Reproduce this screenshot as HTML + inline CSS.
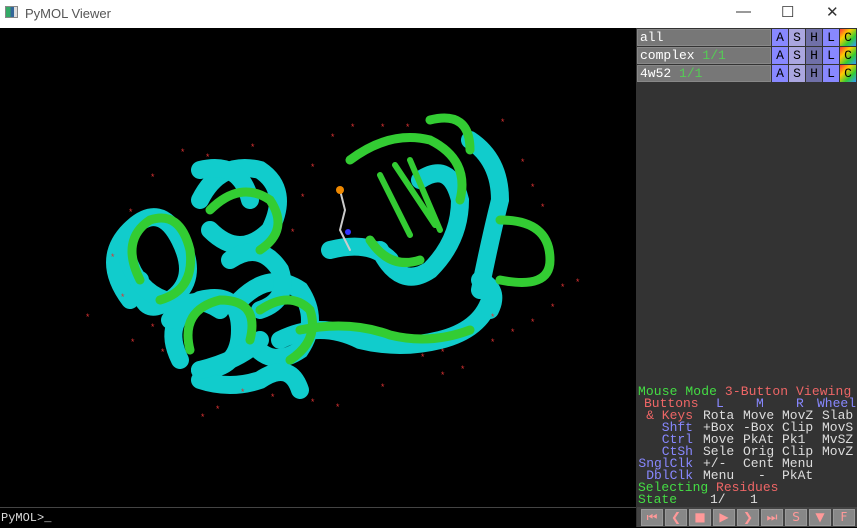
<!DOCTYPE html>
<html><head><meta charset="utf-8"><style>
*{margin:0;padding:0;box-sizing:border-box}
body{width:857px;height:527px;overflow:hidden;background:#000;font-family:"Liberation Mono",monospace;position:relative}
#title{position:absolute;left:0;top:0;width:857px;height:28px;background:#fff;font-family:"Liberation Sans",sans-serif;font-size:13px;color:#555}
#title .t{position:absolute;left:25px;top:6px}
#title .ic{position:absolute;left:5px;top:6px;width:13px;height:12px;border:1px solid #888;background:linear-gradient(90deg,#3a6 0 40%,#369 40% 75%,#ddd 75%)}
#title .b{position:absolute;top:3px;font-size:15px;color:#333}
#vp{position:absolute;left:0;top:28px;width:636px;height:479px;background:#000}
#panel{position:absolute;left:636px;top:28px;width:221px;height:499px;background:#333}
.row{position:absolute;left:637px;height:17px;width:220px}
.row .n{position:absolute;left:0;top:0;width:134px;height:17px;background:#777;color:#fff;font-size:13px;line-height:16px;padding-left:2px;border:1px solid #888}
.row .n span{color:#5c5}
.bt{position:absolute;top:0;width:16px;height:17px;color:#000;font-size:13px;line-height:17px;text-align:center}
.s{position:absolute;font-size:13px;line-height:12px;white-space:pre}
.g{color:#4d4}.r{color:#e66}.b2{color:#88f}.w{color:#ddd}
.lab{position:absolute;right:164px;font-size:13px;line-height:12px;white-space:pre}
#ctrl{position:absolute;left:637px;top:507px;width:220px;height:20px;background:#444}
.cb{position:absolute;top:2px;width:22px;height:17px;background:#888;border:1px solid #999;color:#f99;font-size:12px;text-align:center;line-height:15px;font-family:"DejaVu Sans",sans-serif}
#cmd{position:absolute;left:0;top:507px;width:636px;height:20px;background:#000;border-top:1px solid #444;color:#ddd;font-size:12px;line-height:20px;padding-left:1px}
</style></head><body>
<div id="title"><div class="ic"></div><div class="t">PyMOL Viewer</div>
<div class="b" style="left:736px">&#8212;</div><div class="b" style="left:781px">&#9744;</div><div class="b" style="left:826px">&#10005;</div></div>
<div id="vp"><svg width="636" height="479" viewBox="0 28 636 479">
<g fill="none" stroke-linecap="round">
<g stroke="#11cccc" stroke-width="18">
<path d="M130 300 q-30-40 0-70 q30-30 50 10 q20 40-10 60 q-30 20-30-20"/>
<path d="M125 250 q10 40 40 50"/>
<path d="M180 360 q-20-40 20-60 q40-10 40 30 q0 40-40 40"/>
<path d="M200 200 q20-40 60-30 q30 20 10 60 q-30 30-60 0"/>
<path d="M200 170 q40-10 50 30"/>
<path d="M240 300 q30-30 60-10 q20 30 0 60 q-30 20-50-10"/>
<path d="M230 260 q30-20 50 10 q10 30-20 40"/>
<path d="M170 320 q20-30 50-10"/>
<path d="M280 340 q40-20 80 0 q40 10 80 0 q40-10 50-40"/>
<path d="M420 180 q30-20 40 20 q0 40-30 70 q-30 20-50-20"/>
<path d="M470 140 q30 20 30 60 q-10 40-20 90"/>
<path d="M200 380 q30 10 60 0 q30-20 40 10"/>
<path d="M200 370 q40-10 60-30"/>
<path d="M330 250 q40-10 60 10"/>
<path d="M480 280 q20 10 10 30"/>
</g>
<g stroke="#33cc33" stroke-width="9">
<path d="M140 280 q-20-40 10-60 q30-10 40 30 q5 40-30 50"/>
<path d="M190 350 q-10-40 30-50 q40 0 30 40"/>
<path d="M210 210 q30-30 60-10 q20 30-10 50"/>
<path d="M260 310 q30-20 50 0 q10 30-20 50"/>
<path d="M300 330 q50-10 90 5 q40 10 80-5"/>
<path d="M350 160 q40-30 80-20 q40 20 30 60"/>
<path d="M380 175 l30 60 M395 165 l40 60 M410 160 l30 70" stroke-width="6"/>
<path d="M430 120 q40-10 40 30"/>
<path d="M500 220 q50 0 50 40 q0 30-50 20"/>
<path d="M370 240 q20 30 50 20"/>
</g>
<path d="M340 190 l5 20 l-5 20 l10 20" stroke="#ccc" stroke-width="2"/>
<circle cx="340" cy="190" r="4" fill="#e80"/>
<circle cx="348" cy="232" r="3" fill="#33f"/>
</g>
<g fill="#d33" font-size="9" font-family="Liberation Mono">
<text x="180" y="155">*</text><text x="205" y="160">*</text><text x="150" y="180">*</text><text x="128" y="215">*</text><text x="110" y="260">*</text><text x="85" y="320">*</text><text x="130" y="345">*</text><text x="160" y="355">*</text><text x="120" y="300">*</text><text x="200" y="420">*</text><text x="215" y="412">*</text><text x="270" y="400">*</text><text x="310" y="405">*</text><text x="335" y="410">*</text><text x="380" y="390">*</text><text x="440" y="378">*</text><text x="460" y="372">*</text><text x="490" y="345">*</text><text x="510" y="335">*</text><text x="530" y="325">*</text><text x="550" y="310">*</text><text x="560" y="290">*</text><text x="575" y="285">*</text><text x="520" y="165">*</text><text x="530" y="190">*</text><text x="540" y="210">*</text><text x="500" y="125">*</text><text x="405" y="130">*</text><text x="380" y="130">*</text><text x="330" y="140">*</text><text x="310" y="170">*</text><text x="300" y="200">*</text><text x="290" y="235">*</text><text x="250" y="150">*</text><text x="440" y="355">*</text><text x="420" y="360">*</text><text x="240" y="395">*</text><text x="150" y="330">*</text><text x="490" y="320">*</text><text x="350" y="130">*</text>
</g></svg></div>
<div id="panel"></div>
<div class="row" style="top:29px"><div class="n">all</div><div class="bt" style="left:135px;background:#88f">A</div><div class="bt" style="left:152px;background:#aaa6e0">S</div><div class="bt" style="left:169px;background:#7070a8">H</div><div class="bt" style="left:186px;background:#88f">L</div><div class="bt" style="left:203px;background:linear-gradient(135deg,#f33,#fc0,#3c3,#39f)">C</div></div>
<div class="row" style="top:47px"><div class="n">complex <span>1/1</span></div><div class="bt" style="left:135px;background:#88f">A</div><div class="bt" style="left:152px;background:#aaa6e0">S</div><div class="bt" style="left:169px;background:#7070a8">H</div><div class="bt" style="left:186px;background:#88f">L</div><div class="bt" style="left:203px;background:linear-gradient(135deg,#f33,#fc0,#3c3,#39f)">C</div></div>
<div class="row" style="top:65px"><div class="n">4w52 <span>1/1</span></div><div class="bt" style="left:135px;background:#88f">A</div><div class="bt" style="left:152px;background:#aaa6e0">S</div><div class="bt" style="left:169px;background:#7070a8">H</div><div class="bt" style="left:186px;background:#88f">L</div><div class="bt" style="left:203px;background:linear-gradient(135deg,#f33,#fc0,#3c3,#39f)">C</div></div>

<div class="s" style="left:638px;top:386px;letter-spacing:0.1px"><span class="g">Mouse Mode </span><span class="r">3-Button Viewing</span></div>
<div class="s r" style="left:644px;top:398px">Buttons</div>
<div class="s b2" style="left:716px;top:398px">L</div><div class="s b2" style="left:756px;top:398px">M</div><div class="s b2" style="left:796px;top:398px">R</div><div class="s b2" style="left:817px;top:398px">Wheel</div>
<div class="lab r" style="top:410px">&amp; Keys</div>
<div class="lab b2" style="top:422px">Shft</div>
<div class="lab b2" style="top:434px">Ctrl</div>
<div class="lab b2" style="top:446px">CtSh</div>
<div class="lab b2" style="top:458px">SnglClk</div>
<div class="lab b2" style="top:470px">DblClk</div>
<div class="s w" style="left:703px;top:410px">Rota</div><div class="s w" style="left:743px;top:410px">Move</div><div class="s w" style="left:782px;top:410px">MovZ</div><div class="s w" style="left:822px;top:410px">Slab</div>
<div class="s w" style="left:703px;top:422px">+Box</div><div class="s w" style="left:743px;top:422px">-Box</div><div class="s w" style="left:782px;top:422px">Clip</div><div class="s w" style="left:822px;top:422px">MovS</div>
<div class="s w" style="left:703px;top:434px">Move</div><div class="s w" style="left:743px;top:434px">PkAt</div><div class="s w" style="left:782px;top:434px">Pk1</div><div class="s w" style="left:822px;top:434px">MvSZ</div>
<div class="s w" style="left:703px;top:446px">Sele</div><div class="s w" style="left:743px;top:446px">Orig</div><div class="s w" style="left:782px;top:446px">Clip</div><div class="s w" style="left:822px;top:446px">MovZ</div>
<div class="s w" style="left:703px;top:458px">+/-</div><div class="s w" style="left:743px;top:458px">Cent</div><div class="s w" style="left:782px;top:458px">Menu</div>
<div class="s w" style="left:703px;top:470px">Menu</div><div class="s w" style="left:758px;top:470px">-</div><div class="s w" style="left:782px;top:470px">PkAt</div>
<div class="s" style="left:638px;top:482px"><span class="g">Selecting </span><span class="r">Residues</span></div>
<div class="s" style="left:638px;top:494px"><span class="g">State</span></div>
<div class="s w" style="left:710px;top:494px">1/</div><div class="s w" style="left:750px;top:494px">1</div>
<div id="ctrl">
<div class="cb" style="left:4px">&#9198;</div><div class="cb" style="left:28px">&#10094;</div><div class="cb" style="left:52px">&#9632;</div><div class="cb" style="left:76px">&#9654;</div><div class="cb" style="left:100px">&#10095;</div><div class="cb" style="left:124px">&#9197;</div><div class="cb" style="left:148px">S</div><div class="cb" style="left:172px">&#9660;</div><div class="cb" style="left:196px">F</div></div>
<div id="cmd">PyMOL&gt;_</div>
</body></html>
